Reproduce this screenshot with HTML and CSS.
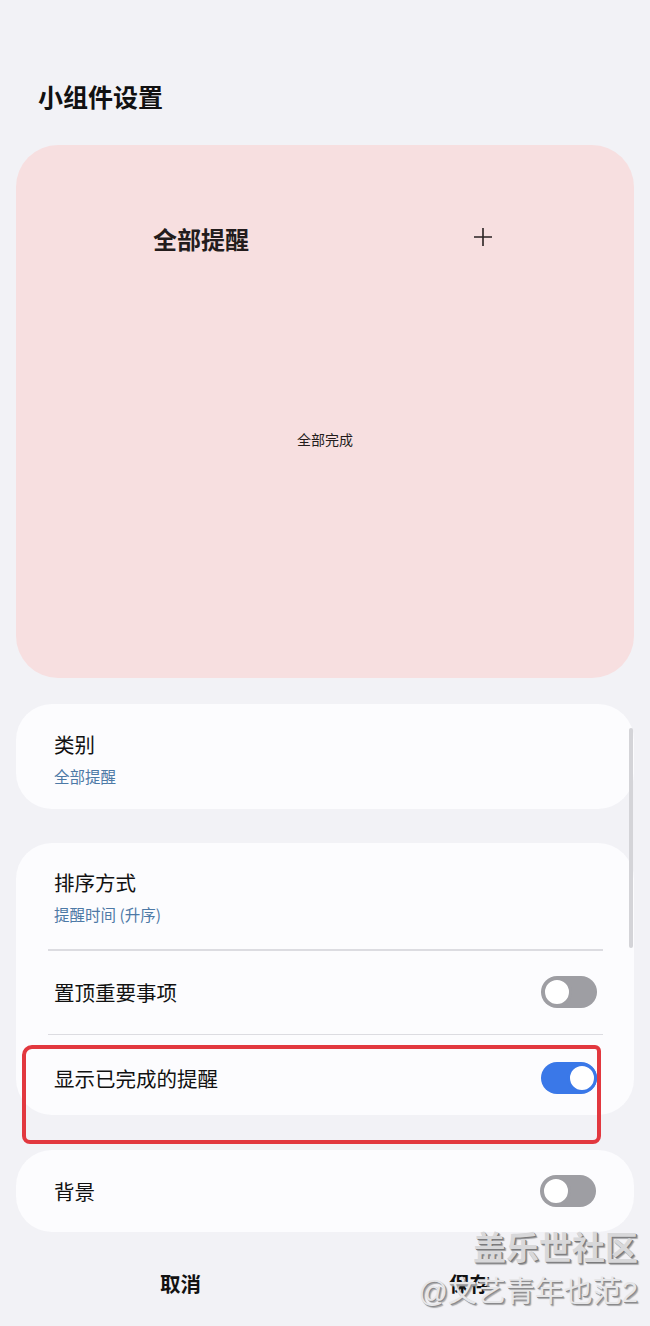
FILE: index.html
```html
<!DOCTYPE html>
<html lang="zh">
<head>
<meta charset="utf-8">
<link rel="stylesheet" href="styles.css">
</head>
<body>
<div class="page">
  <h1 class="title">小组件设置</h1>

  <div class="preview">
    <div class="preview-head">
      <span class="preview-title">全部提醒</span>
      <svg class="plus" width="22" height="22" viewBox="0 0 22 22"><path d="M11 2v18M2 11h18" stroke="#2a2222" stroke-width="1.6" fill="none"/></svg>
    </div>
    <div class="preview-empty">全部完成</div>
  </div>

  <div class="card card-single">
    <div class="row row-two">
      <div class="label">类别</div>
      <div class="sub">全部提醒</div>
    </div>
  </div>

  <div class="card card-group">
    <div class="row row-two row-first">
      <div class="label">排序方式</div>
      <div class="sub">提醒时间 (升序)</div>
    </div>
    <div class="divider"></div>
    <div class="row row-switch">
      <div class="label">置顶重要事项</div>
      <span class="toggle"><span class="knob"></span></span>
    </div>
    <div class="divider"></div>
    <div class="row row-switch row-last">
      <div class="label">显示已完成的提醒</div>
      <span class="toggle on"><span class="knob"></span></span>
    </div>
  </div>

  <div class="card card-bg">
    <div class="row row-switch">
      <div class="label">背景</div>
      <span class="toggle"><span class="knob"></span></span>
    </div>
  </div>

  <div class="actions">
    <button class="action">取消</button>
    <button class="action">保存</button>
  </div>

  <div class="highlight"></div>
  <div class="scrollbar"></div>
  <div class="watermark">
    <div class="wm-1">盖乐世社区</div>
    <div class="wm-2">@文艺青年也范2</div>
  </div>
</div>
</body>
</html>
```

FILE: styles.css
```css
* { box-sizing: border-box; }
html, body {
  margin: 0;
  padding: 0;
  background: #f2f2f6;
}
body {
  font-family: "Noto Sans CJK SC", "Noto Sans", sans-serif;
  color: #111;
}
.page {
  position: relative;
  width: 650px;
  height: 1326px;
  padding: 0 16px;
  overflow: hidden;
}
.title {
  margin: 0;
  padding: 79px 0 0 22px;
  height: 145px;
  font-size: 25px;
  line-height: 34px;
  font-weight: 700;
  color: #111;
}
.preview {
  height: 533px;
  background: #f7dfe0;
  border-radius: 42px;
  display: flex;
  flex-direction: column;
}
.preview-head {
  display: flex;
  justify-content: space-between;
  align-items: center;
  padding: 77px 140px 0 137px;
  height: 111px;
}
.preview-title {
  font-size: 24px;
  line-height: 34px;
  font-weight: 700;
  color: #231c1c;
}
.plus { display: block; margin-top: -4px; }
.preview-empty {
  text-align: center;
  font-size: 14px;
  line-height: 20px;
  color: #231c1c;
  margin-top: 173px;
}
.card {
  background: #fcfcfe;
  border-radius: 36px;
  padding: 0 38px;
}
.card-single {
  margin-top: 26px;
  height: 105px;
}
.card-group {
  margin-top: 34px;
  height: 272px;
  padding: 0 31px 0 32px;
}
.card-bg {
  margin-top: 35px;
  height: 82px;
}
.row {
  display: flex;
}
.row-two {
  flex-direction: column;
  justify-content: flex-start;
}
.card-single .row-two { padding-top: 27px; }
.row-first { padding: 26px 0 0 6px; height: 106px; }
.label {
  font-size: 20.5px;
  line-height: 26px;
  color: #111;
}
.sub {
  font-size: 15.5px;
  line-height: 22px;
  color: #4d79a6;
  margin-top: 8px;
}
.divider {
  height: 1.5px;
  background: #dcdce1;
}
.row-switch {
  align-items: center;
  justify-content: space-between;
  height: 83px;
  padding: 0 6px;
}
.card-bg .row-switch { height: 82px; padding: 0; }
.row-last { height: 85px; }
.toggle {
  position: relative;
  width: 56px;
  height: 32px;
  border-radius: 16px;
  background: #9e9ea3;
  display: block;
}
.knob {
  position: absolute;
  left: 1px;
  top: 1px;
  width: 30px;
  height: 30px;
  border-radius: 50%;
  background: #fff;
  border: 3px solid #9e9ea3;
}
.toggle.on { background: #3a78e8; }
.toggle.on .knob {
  left: auto;
  right: 0;
  border-color: #3a78e8;
}
.actions {
  display: flex;
  justify-content: center;
  margin-top: 32px;
}
.action {
  width: 289px;
  border: 0;
  background: none;
  font-family: inherit;
  font-size: 20.5px;
  font-weight: 700;
  line-height: 38px;
  color: #111;
  padding: 0;
}
.highlight {
  position: absolute;
  left: 22px;
  top: 1045px;
  width: 579px;
  height: 99px;
  border: 4px solid #e2383f;
  border-radius: 10px 6px 8px 8px;
  pointer-events: none;
}
.scrollbar {
  position: absolute;
  left: 629px;
  top: 728px;
  width: 4px;
  height: 220px;
  border-radius: 2px;
  background: #d4d4d8;
}
.watermark {
  position: absolute;
  right: 12px;
  top: 1224px;
  text-align: right;
  pointer-events: none;
}
.wm-1 {
  font-size: 33px;
  line-height: 44px;
  color: #d8d8da;
  font-weight: 700;
  text-shadow: 1px 1px 0 #7a7a7c, 2px 2px 1px #9a9a9c;
}
.wm-2 {
  font-size: 29px;
  line-height: 40px;
  color: #e6e6e8;
  text-shadow: 1px 1px 0 #8a8a8c, 2px 2px 1px #a8a8aa;
  font-family: "Liberation Sans", "Noto Sans CJK SC", sans-serif;
  margin-top: 4px;
}
```
